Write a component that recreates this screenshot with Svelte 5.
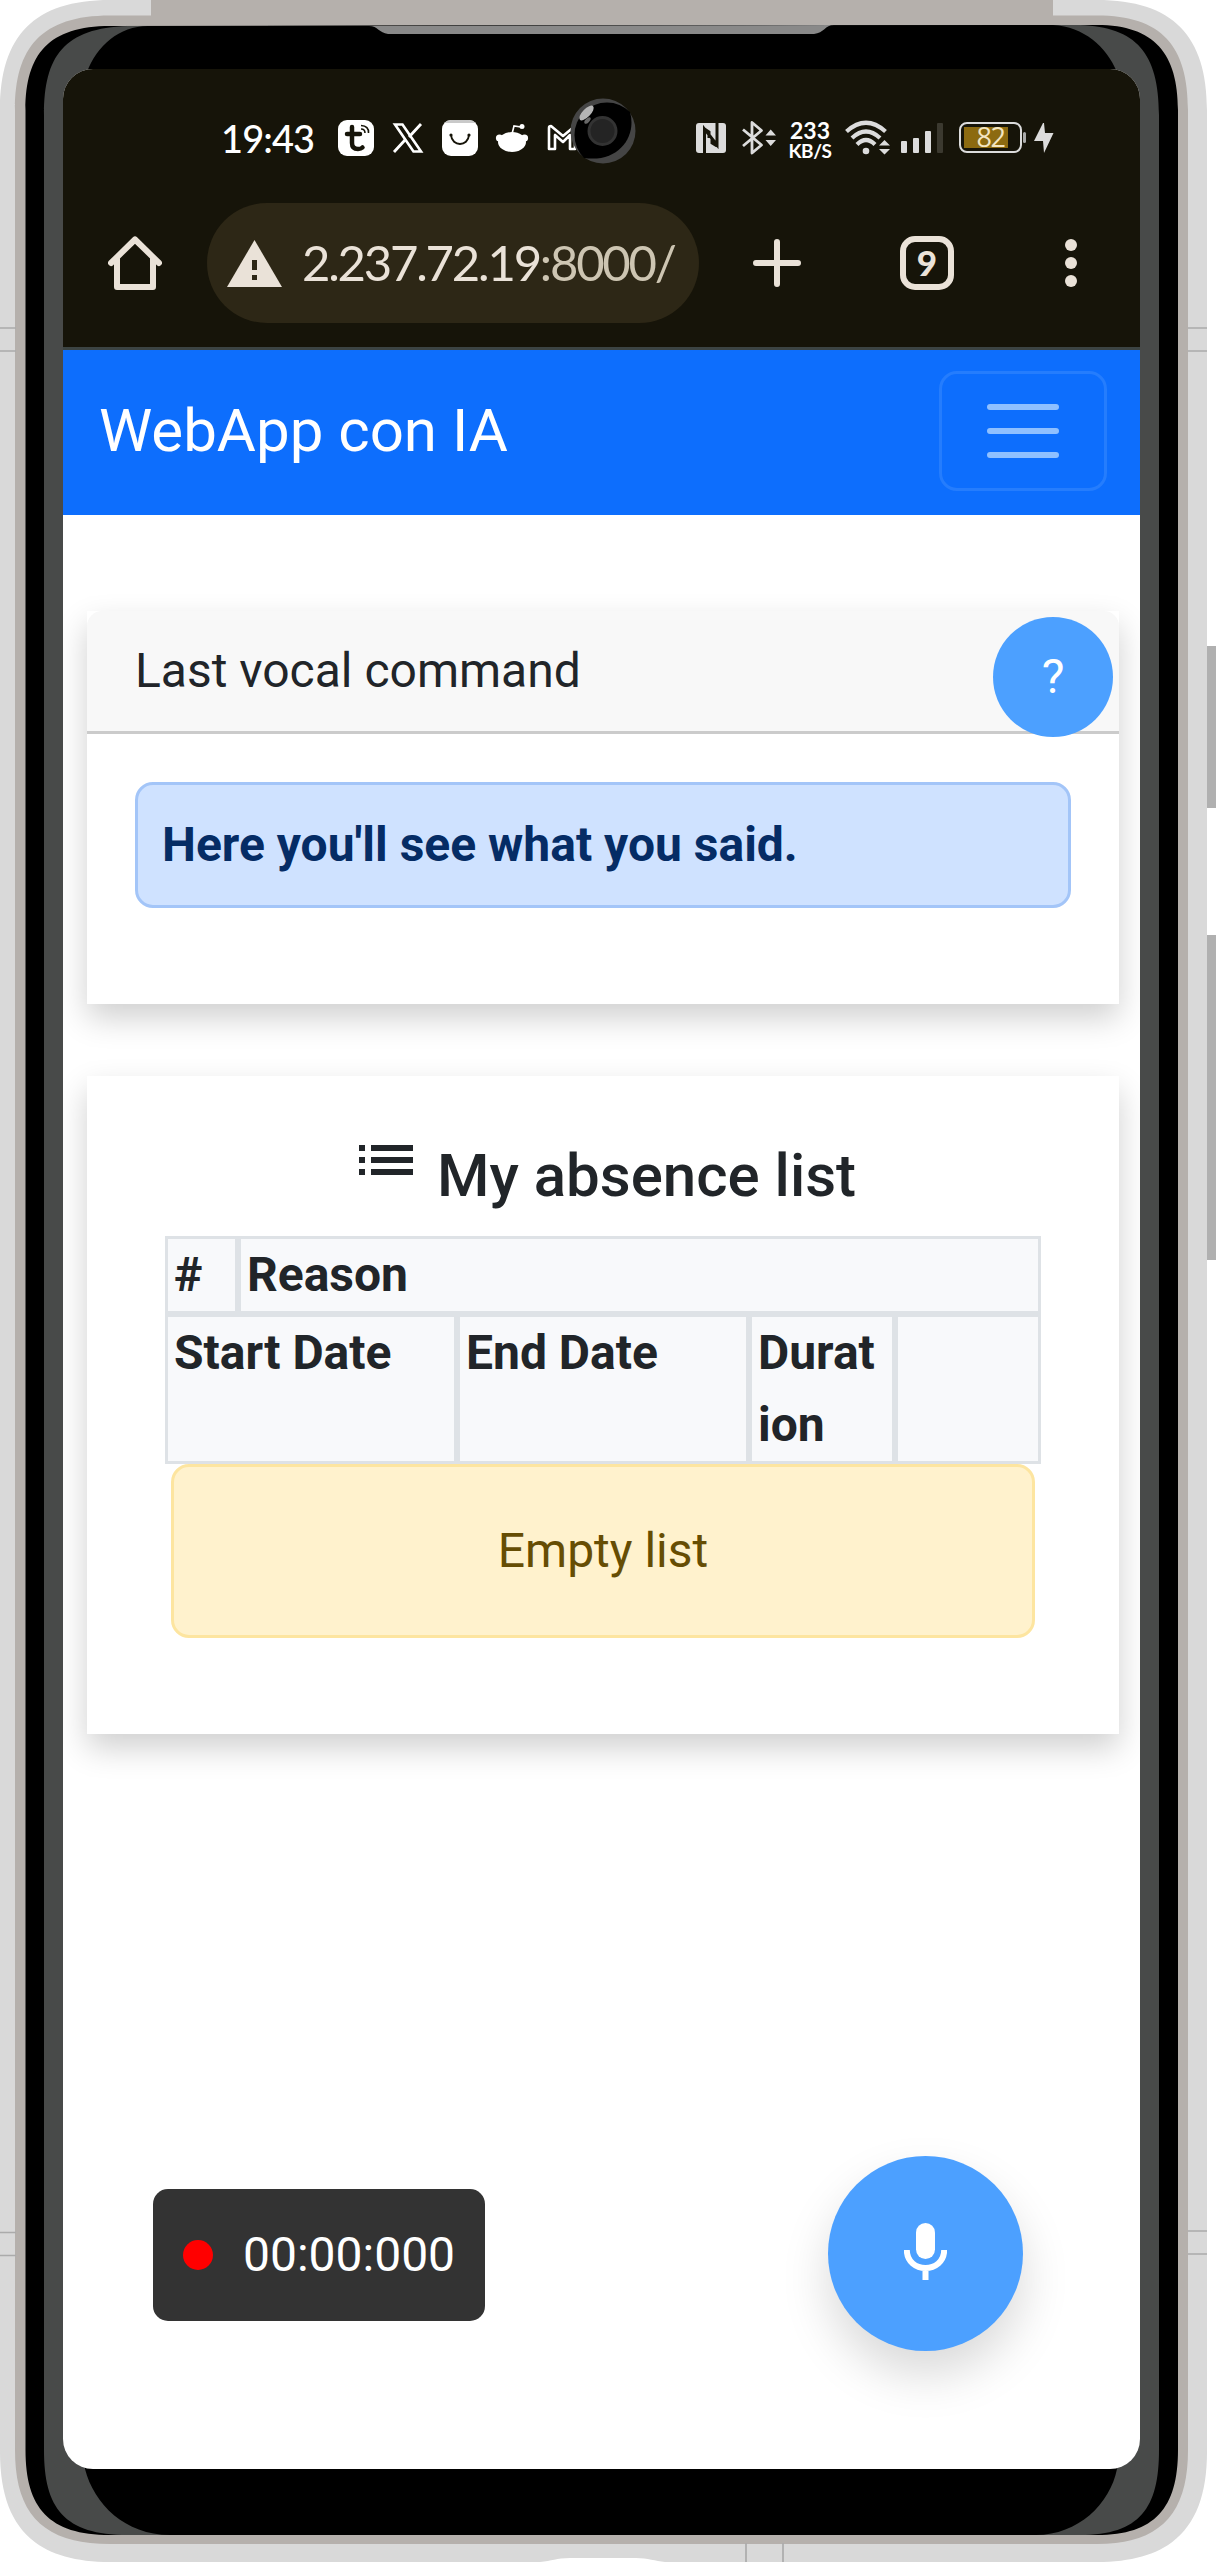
<script>
  const topCells = [
    { label: '#', span: 1 },
    { label: 'Reason', span: 11 },
  ];
  const bottomCells = [
    { label: 'Start Date', span: 4 },
    { label: 'End Date', span: 4 },
    { label: 'Duration', span: 2 },
    { label: '', span: 2 },
  ];
</script>

<div class="device">
  <!-- phone body -->
  <svg class="shell" viewBox="0 0 1216 2562" aria-hidden="true">
    <rect x="1196" y="646" width="24" height="162" rx="4" fill="#b0b0b0" />
    <rect x="1196" y="935" width="24" height="325" rx="4" fill="#b0b0b0" />
    <path d="M0 110C0 36 34 0 110 0H1097C1173 0 1207 36 1207 110V2452C1207 2526 1173 2562 1097 2562H665C655 2561 648 2558 636 2558H570C556 2558 552 2561 540 2562H110C34 2562 0 2526 0 2452Z" fill="#d9d9d9" />
    <path d="M15 110C15 48 41 15.500 110 15.500H151V0H1053V15.500H1097C1162 15.500 1188 46 1188 110V2450C1188 2512 1162 2544 1097 2544H110C41 2544 15 2512 15 2450Z" fill="#b5b0ac" />
    <path d="M25.500 110C25.500 54 49 26 110 26L1097 25C1155 25 1178 54 1178 110V2450C1178 2508 1155 2535 1097 2535H110C49 2535 25.500 2508 25.500 2450Z" fill="#000" />
    <path d="M44 115C44 56 64 28 128 26H148L1053 25H1080C1136 27 1159 53 1159 115V2450C1159 2508 1140 2535 1080 2535H128C64 2535 44 2508 44 2450Z" fill="#484a49" />
    <path d="M87 72C97 46 119 26 148 26L1053 25C1084 27 1106 46 1117 72V2469C1110 2504 1078 2535 1036 2535H170C125 2535 94 2504 85 2469Z" fill="#000" />
    <path d="M369 26C378 26 379 33 388 34H814C824 33 825 25 834 25Z" fill="#898989" />
    <g stroke="#ababab" stroke-width="1.700">
      <path d="M0 328H16M0 351H16M0 2232.500H16M0 2255.500H16M1188 328H1207M1188 351H1207M1188 2231H1207M1188 2254H1207M746 2543V2562M783 2543V2562" />
    </g>
  </svg>

  <div class="screen">
    <div class="status">
      <span class="time">19:43</span>
      <svg class="notif" width="240" height="36" viewBox="0 0 240 36">
        <rect width="36" height="36" rx="9" fill="#fff" />
        <path d="M14 7V23Q14 29 20 29Q23 29 24.500 27.500M9 14H22" fill="none" stroke="#161409" stroke-width="4.500" stroke-linecap="round" />
        <path d="M23 9Q27 9 27 13M23 5.500Q31 6 30.500 13" fill="none" stroke="#161409" stroke-width="1.600" />
        <path d="M57 4.500H64.500L83 31.500H75.500Z" fill="none" stroke="#fff" stroke-width="2.600" />
        <path d="M83 4L71 17M67 20L56 32" stroke="#fff" stroke-width="2.800" />
        <rect x="104" width="36" height="36" rx="9" fill="#fff" />
        <path d="M106 3Q109 0 113 0H131Q135 0 138 3Z" fill="#c9c9c9" />
        <path d="M113 15C114 27 130 27 131 15" fill="none" stroke="#161409" stroke-width="1.900" />
        <circle cx="113" cy="15" r="1.600" fill="#161409" /><circle cx="131" cy="15" r="1.600" fill="#161409" />
        <ellipse cx="174" cy="22" rx="14" ry="10" fill="#fff" />
        <circle cx="161.500" cy="18" r="3.600" fill="#fff" /><circle cx="186.500" cy="18" r="3.600" fill="#fff" />
        <path d="M174 14L176 6L183 7" fill="none" stroke="#fff" stroke-width="1.600" /><circle cx="184" cy="6.500" r="2.500" fill="#fff" />
        <path d="M217 29H211V8Q211 6 213 6L225 16L237 6V29H232V15L225 22L217 15Z" fill="none" stroke="#fff" stroke-width="2.600" stroke-linejoin="round" />
      </svg>
      <svg class="radio" width="82" height="36" viewBox="0 0 82 36">
        <rect y="3" width="30" height="30" rx="3" fill="#dcdcdc" />
        <path d="M8.500 34V9L21 25V2M8.500 9L13 12V18M21 26L16 23V18" fill="none" stroke="#161409" stroke-width="3" />
        <path d="M47 9.500L65.500 25L56 33V2.500L65.500 10.500L47 26" fill="none" stroke="#dcdcdc" stroke-width="2.800" stroke-linejoin="round" />
        <path d="M69.500 15.500L74.700 9.500L80 15.500ZM69.500 20L74.700 26L80 20Z" fill="#dcdcdc" />
      </svg>
      <span class="rate"><b>233</b><b class="unit">KB/S</b></span>
      <svg class="wifi" width="100" height="36" viewBox="0 0 100 36">
        <g fill="none" stroke="#dcdcdc" stroke-width="4.200">
          <path d="M1.500 11.500Q21 -6 40.500 11.500M7 18Q21 5 35 18M12 24.500Q21 15.500 30 24.500" />
        </g>
        <circle cx="21" cy="31" r="3.300" fill="#dcdcdc" />
        <path d="M33 27L39.500 18L46 27ZM33 28L39.500 36L46 28Z" fill="#161409" />
        <path d="M34 25.500L39.500 20L45 25.500ZM34 29L39.500 34.500L45 29Z" fill="#dcdcdc" />
        <rect x="56" y="21" width="6" height="12" rx="1" fill="#dcdcdc" /><rect x="68" y="18" width="6" height="15" rx="1" fill="#dcdcdc" />
        <rect x="80" y="11" width="6" height="22" rx="1" fill="#dcdcdc" /><rect x="92" y="3" width="6" height="30" rx="1" fill="#3b392f" />
      </svg>
      <span class="battery">82</span>
      <span class="nub"></span>
      <svg class="bolt" width="20" height="30" viewBox="0 0 20 30"><path d="M9 0L0 18H9L10 30L19.500 10H11L10 0Z" fill="#dcdcdc" /></svg>
      <svg class="camera" width="66" height="66" viewBox="0 0 66 66">
        <circle cx="33" cy="33" r="32.500" fill="#454545" />
        <path d="M14 60A32 32 0 1 1 60 14C67 38 49 65 14 60Z" fill="#000" />
        <circle cx="32.500" cy="33" r="13.500" fill="#242424" stroke="#333" stroke-width="3" />
        <ellipse cx="16.500" cy="15" rx="9.500" ry="4" transform="rotate(-46 16.500 15)" fill="#b5b5b5" />
        <ellipse cx="17.500" cy="22.500" rx="4" ry="2" transform="rotate(-46 17.500 22.500)" fill="#686868" />
      </svg>
    </div>

    <div class="browser">
      <svg class="home" width="54" height="54" viewBox="0 0 54 54" fill="none" stroke="#eae2d8" stroke-width="6" stroke-linecap="round" stroke-linejoin="round">
        <path d="M3 27L27 3.500L51 27" /><path d="M9 23V51H45V23" />
      </svg>
      <div class="address">
        <svg width="55" height="47" viewBox="0 0 55 47"><path d="M27.500 0L55 47H0Z" fill="#eae2d8" /><path d="M25 20H30V30H25ZM25 35H30V40H25Z" fill="#2d2716" /></svg>
        <span class="url">2.237.72.19<span class="port">:8000/</span></span>
      </div>
      <svg class="plus" width="48" height="48" viewBox="0 0 48 48"><path d="M24 3V45M3 24H45" stroke="#eae2d8" stroke-width="6" stroke-linecap="round" /></svg>
      <span class="tabs">9</span>
      <svg class="more" width="12" height="48" viewBox="0 0 12 48" fill="#eae2d8"><circle cx="6" cy="6" r="6" /><circle cx="6" cy="24" r="6" /><circle cx="6" cy="42" r="6" /></svg>
    </div>

    <nav>
      <span class="brand">WebApp con IA</span>
      <button class="toggler" aria-label="Menu"><i></i><i></i><i></i></button>
    </nav>

    <main>
      <section class="card">
        <header>Last vocal command<button class="help">?</button></header>
        <div class="body"><div class="said">Here you'll see what you said.</div></div>
      </section>

      <section class="card list">
        <h1>
          <svg width="54" height="30" viewBox="0 0 54 30" fill="#212529"><path d="M0 0H6V6H0ZM12 0H54V6H12ZM0 12H6V18H0ZM12 12H54V18H12ZM0 24H6V30H0ZM12 24H54V30H12Z" /></svg>
          <span>My absence list</span>
        </h1>
        <div class="row">
          {#each topCells as c}<div class="cell s{c.span}">{c.label}</div>{/each}
          {#each bottomCells as c}<div class="cell s{c.span}">{c.label}</div>{/each}
        </div>
        <div class="empty">Empty list</div>
      </section>

      <footer>
        <div class="timer"><i></i><span>00:00:000</span></div>
        <button class="mic" aria-label="Record">
          <svg width="43" height="57" viewBox="0 0 43 57"><rect x="12" width="19" height="36" rx="9.500" fill="#fff" /><path d="M2.800 27C3 51 40 51 40.200 27M21.500 45V57" fill="none" stroke="#fff" stroke-width="6" /></svg>
        </button>
      </footer>
    </main>
  </div>
</div>

<style>
  :global(body) { background: #fff; }
  * { box-sizing: border-box; }
  svg { display: block; flex: none; }
  button { border: 0; padding: 0; font: inherit; }
  .device { position: relative; width: 1216px; height: 2562px; padding: 69px 76px 93px 63px; overflow: hidden; font-family: Roboto, sans-serif; }
  .shell { position: absolute; left: 0; top: 0; width: 1216px; height: 2562px; }
  .screen { position: relative; height: 2400px; display: flex; flex-direction: column; background: #fff; border-radius: 30px; overflow: hidden; font-size: 48px; line-height: 72px; color: #212529; }

  .status { position: relative; height: 134px; padding: 3px 0 0 158px; flex: none; display: flex; align-items: center; background: #161409; }
  .time { width: 93px; color: #fff; font: 500 38px/1 Lato, sans-serif; letter-spacing: -.9px; white-space: nowrap; }
  .notif { margin-left: 24px; }
  .radio { margin-left: 118px; }
  .rate { margin: 4px 0 0 8px; width: 48px; display: flex; flex-direction: column; align-items: center; color: #fff; font: 23px/22px Lato, sans-serif; }
  .unit { font-size: 19px; line-height: 19px; letter-spacing: -.4px; }
  .wifi { margin-left: 11px; }
  .battery { width: 63px; height: 31px; margin-left: 14px; border: 2.500px solid #dcdcdc; border-radius: 8px; text-align: center; color: #f3e5c2; font: 500 27px/26px "Open Sans", sans-serif; letter-spacing: -1.500px; background: linear-gradient(#8c6a10, #8c6a10) 3px 3px / 44px 21px no-repeat; }
  .nub { width: 3px; height: 11px; margin-left: 1px; border-radius: 2px; background: #aaa; }
  .bolt { margin-left: 8px; }
  .camera { position: absolute; left: 507px; top: 29px; }

  .browser { height: 147px; padding: 0 0 24px 45px; flex: none; display: flex; align-items: center; background: #161409; border-bottom: 3px solid #3c4443; }
  .address { width: 492px; height: 120px; margin-left: 45px; padding-left: 20px; display: flex; align-items: center; border-radius: 60px; background: #2d2716; }
  .url { margin: -2px 0 0 20px; color: #eae2d8; font: 49px/60px Lato, sans-serif; letter-spacing: -2.200px; white-space: nowrap; }
  .port { color: #cdc5b2; }
  .plus { margin-left: 54px; }
  .tabs { width: 54px; height: 54px; margin-left: 99px; border: 6px solid #eae2d8; border-radius: 15px; color: #eae2d8; text-align: center; font: 900 35px/40px Lato, sans-serif; }
  .more { margin-left: 111px; }

  nav { height: 165px; padding: 21px 33px 24px 36px; flex: none; display: flex; align-items: center; justify-content: space-between; background: #0d6efd; }
  .brand { color: #fff; font-size: 60px; }
  .toggler { width: 168px; height: 120px; display: flex; flex-direction: column; align-items: center; justify-content: center; gap: 18px; border: 3px solid #257dfd; border-radius: 18px; background: none; }
  .toggler i { width: 72px; height: 6px; border-radius: 3px; background: #8fc0ff; }

  main { flex: 1; padding: 96px 21px 0 24px; display: flex; flex-direction: column; }
  .card { background: #fff; box-shadow: 0 14px 30px rgba(0, 0, 0, .19); }
  header { position: relative; height: 123px; padding: 24px 48px; border-bottom: 3px solid #cbcbcb; border-radius: 15px 15px 0 0; background: #f8f8f8; }
  .help { position: absolute; right: 6px; top: 6px; width: 120px; height: 120px; border-radius: 50%; background: #4ca0ff; color: #fff; }
  .body { padding: 48px 48px 96px; }
  .said { padding: 24px; border: 3px solid #a3c5f8; border-radius: 18px; background: #cfe2ff; color: #052c65; font-weight: 700; }
  .list { position: relative; height: 658px; margin-top: 72px; padding: 64px 78px 0; }
  h1 { margin: 0 0 24px; height: 72px; padding-left: 194px; display: flex; font-size: 60px; font-weight: 500; line-height: 72px; white-space: nowrap; }
  h1 svg { margin-top: 5px; }
  h1 span { margin-left: 24px; }
  .row { display: grid; grid-template-columns: repeat(12, 1fr); }
  .cell { border: 3px solid #dee2e6; background: #f8f9fb; padding: 0 6px; font-weight: 700; min-width: 0; overflow-wrap: anywhere; }
  .s2 { grid-column: span 2; }
  .s4 { grid-column: span 4; }
  .s11 { grid-column: span 11; }
  .empty { margin: 0 6px; padding: 48px; border: 3px solid #fde5a0; border-radius: 18px; background: #fff2cd; color: #664d03; text-align: center; }
  footer { display: flex; align-items: center; justify-content: space-between; margin-top: 422px; padding: 0 96px 0 66px; }
  .timer { width: 332px; height: 132px; margin-top: 3px; padding-left: 30px; display: flex; align-items: center; border-radius: 15px; background: #333; color: #fff; }
  .timer i { width: 30px; height: 30px; margin-right: 30px; border-radius: 50%; background: #f00; }
  .mic { width: 195px; height: 195px; padding-bottom: 4px; display: flex; align-items: center; justify-content: center; border-radius: 50%; background: #4ca0ff; box-shadow: 0 24px 48px rgba(0, 0, 0, .15); }
</style>
